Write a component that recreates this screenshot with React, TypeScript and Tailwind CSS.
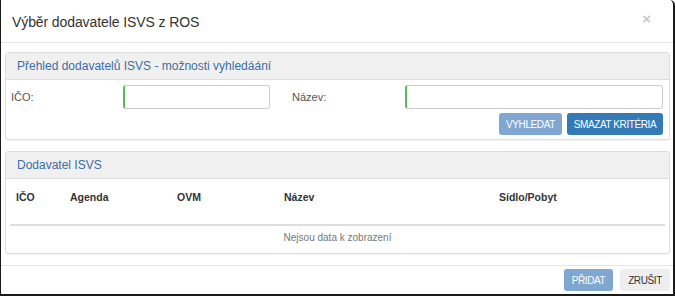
import React from "react";

export default function App() {
  const font = { fontFamily: '"Liberation Sans", Arial, Helvetica, sans-serif' };
  return (
    <div style={font} className="w-[675px] h-[296px] bg-white overflow-hidden">
      <div className="w-[675px] h-[296px] flex flex-col border-l-[1.5px] border-r-2 border-b-2 border-[#1a1a1a] rounded-tr-[5px] bg-white">
        {/* Header */}
        <div className="h-[43px] shrink-0 border-b border-[#e5e5e5] flex items-center justify-between pl-[11px] pr-[22px]">
          <div className="text-[14px] text-[#333] leading-none mt-[1px] tracking-[-0.1px]">Výběr dodavatele ISVS z ROS</div>
          <div className="text-[15px] font-bold text-[#c8c8c8] leading-none -mt-[6px]">×</div>
        </div>
        {/* Body */}
        <div className="flex-1 pt-[9px] pl-[4px] pr-[3px] flex flex-col gap-[11px]">
          {/* Panel 1 */}
          <div className="border border-[#ddd] rounded-[3px] shadow-[0_1px_1px_rgba(0,0,0,0.05)]">
            <div className="h-[27px] bg-[#f0f0f0] border-b border-[#ddd] flex items-center pl-[11px]">
              <span className="text-[12px] text-[#3b6ea8]">Přehled dodavatelů ISVS - možnosti vyhledáání</span>
            </div>
            <div className="pt-[5px] pb-[4px] pl-[5px] pr-[6px]">
              <div className="flex items-center h-[24px]">
                <div className="w-[112px] text-[11px] text-[#555]">IČO:</div>
                <div className="w-[147px] h-[24px] border border-[#ccc] border-l-2 border-l-[#5cb85c] rounded-[3px]" />
                <div className="w-[22px]" />
                <div className="w-[113px] text-[11px] text-[#555]">Název:</div>
                <div className="flex-1 h-[24px] border border-[#ccc] border-l-2 border-l-[#5cb85c] rounded-[3px]" />
              </div>
              <div className="flex justify-end gap-[5px] mt-[4px]">
                <div className="w-[63px] h-[22px] rounded-[3px] bg-[#7fa7d2] text-white text-[10px] flex items-center justify-center tracking-[-0.4px]">VYHLEDAT</div>
                <div className="w-[96px] h-[22px] rounded-[3px] bg-[#337ab7] text-white text-[10px] flex items-center justify-center tracking-[-0.4px]">SMAZAT KRITÉRIA</div>
              </div>
            </div>
          </div>
          {/* Panel 2 */}
          <div className="border border-[#ddd] rounded-[3px] shadow-[0_1px_1px_rgba(0,0,0,0.05)]">
            <div className="h-[27px] bg-[#f0f0f0] border-b border-[#ddd] flex items-center pl-[11px]">
              <span className="text-[12px] text-[#3b6ea8]">Dodavatel ISVS</span>
            </div>
            <div className="px-[4px] pb-[4px]">
              <div className="flex h-[47px] items-start pt-[12px] leading-[12px] border-b-2 border-[#ddd] text-[10.5px] font-bold text-[#333]">
                <div className="w-[54px] pl-[6px]">IČO</div>
                <div className="w-[107px] pl-[6px]">Agenda</div>
                <div className="w-[107px] pl-[6px]">OVM</div>
                <div className="w-[215px] pl-[6px]">Název</div>
                <div className="flex-1 pl-[6px]">Sídlo/Pobyt</div>
              </div>
              <div className="h-[23px] flex items-center justify-center text-[10px] text-[#777]">Nejsou data k zobrazení</div>
            </div>
          </div>
        </div>
        {/* Footer */}
        <div className="h-[29px] shrink-0 border-t border-[#e5e5e5] flex items-center justify-end gap-[7px] pr-[3px]">
          <div className="w-[49px] h-[22px] rounded-[3px] bg-[#7fa7d2] text-white text-[10px] flex items-center justify-center tracking-[-0.4px]">PŘIDAT</div>
          <div className="w-[50px] h-[22px] rounded-[3px] bg-[#eeeeee] text-[#333] text-[10px] flex items-center justify-center tracking-[-0.4px]">ZRUŠIT</div>
        </div>
      </div>
    </div>
  );
}
